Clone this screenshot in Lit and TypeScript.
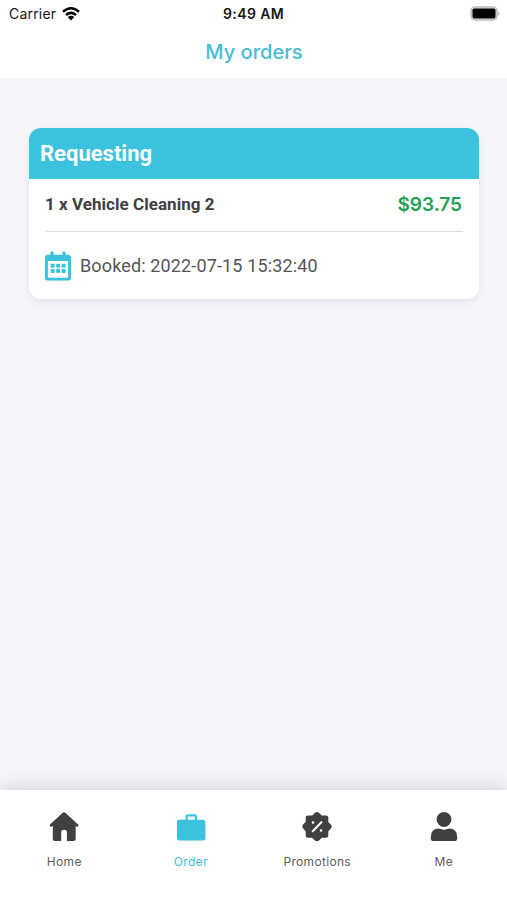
import { LitElement, html, css, svg } from "lit";
import { customElement } from "lit/decorators.js";
import { classMap } from "lit/directives/class-map.js";

const tabs = [
  {
    id: "home", label: "Home",
    icon: svg`<path d="M15 .8Q15.700 .8 16.300 1.300L29.100 13Q30 14.100 29 15Q28.300 15.500 27.400 14.900L26.700 14.300V27.400Q26.700 29.400 24.700 29.400H17.900V20.800Q17.900 18.200 15 18.200T12.200 20.800V29.400H5.800Q3.800 29.400 3.800 27.400V14.300L2.800 15Q1.900 15.500 1.200 15Q.2 14.100 1 13L13.700 1.300Q14.300 .8 15 .8Z"/>`,
  },
  {
    id: "order", label: "Order",
    icon: svg`<path fill-rule="evenodd" d="M3.300 8.300H9.500V5.300Q9.500 2.700 12.100 2.700H18.600Q21.200 2.700 21.200 5.300V8.300H27Q29.400 8.300 29.400 10.700V26.700Q29.400 29.100 27 29.100H3.300Q.9 29.100 .9 26.700V10.700Q.9 8.300 3.300 8.300ZM11.800 5V8.300H18.900V5Z"/>`,
  },
  {
    id: "promotions", label: "Promotions",
    icon: svg`<path d="M13 1.300Q15 -.4 17 1.300L19.800 4H24Q26.300 4 26.300 6V10.500L28.900 13Q30.400 15 28.900 17L26.300 19.700V24Q26.300 26.300 24 26.300H19.800L17 29Q15 30.500 13 29L10.200 26.300H6Q3.700 26.300 3.700 24V19.700L1.100 17Q-.4 15 1.100 13L3.700 10.500V6Q3.700 4 6 4H10.200Z"/><path d="M10.700 19.800L19.500 10.600" stroke="#fff" stroke-width="2" stroke-linecap="round"/><circle cx="11" cy="11" r="1.300" fill="#fff"/><circle cx="19" cy="19" r="1.300" fill="#fff"/>`,
  },
  {
    id: "me", label: "Me",
    icon: svg`<circle cx="15" cy="8" r="7.400"/><path d="M9 17Q10.500 17 11.800 17.500Q15 18.800 18.200 17.500Q19.500 17 21 17Q28.200 17.500 28.200 25.500V27.200Q28.200 29.600 25.800 29.600H4.200Q1.800 29.600 1.800 27.200V25.500Q1.800 17.500 9 17Z"/>`,
  },
];

@customElement("app-root")
export class AppRoot extends LitElement {
  static styles = css`
    :host { display: flex; flex-direction: column; height: 900px; background: #f4f6fa; font-family: Roboto, "Liberation Sans", sans-serif; overflow: hidden; }
    svg { display: block; flex: none; }
    .top { height: 78px; flex: none; background: #fff; font-family: Inter, sans-serif; box-shadow: 0 0 1px rgba(0, 0, 0, .05); }
    .status { height: 27px; display: grid; grid-template-columns: 1fr auto 1fr; align-items: center; padding: 0 7px 0 9px; color: #171719; }
    .carrier { display: flex; align-items: center; gap: 6px; font-size: 14px; letter-spacing: .2px; }
    .time { font-size: 14px; font-weight: 600; letter-spacing: .4px; margin-right: 2px; }
    .battery { justify-self: end; }
    .title { margin: 0; text-align: center; font-size: 20px; line-height: 50px; font-weight: 500; color: #45bdd6; padding-left: 1px; }
    main { flex: 1; padding: 50px 28px 0 29px; }
    .card { height: 171px; border-radius: 12px; background: #fff; overflow: hidden; box-shadow: 0 3px 10px rgba(0, 0, 0, .08); }
    .state { height: 51px; padding-left: 11px; line-height: 52px; color: #fff; background: #3ac2de; font-size: 22px; font-weight: 700; }
    .body { padding: 0 16px; color: #555; }
    .item { height: 50px; padding-bottom: 2px; display: flex; justify-content: space-between; align-items: center; border-bottom: 1px solid #d9dade; }
    .name { font-size: 17px; font-weight: 700; letter-spacing: .04px; color: #404042; }
    .price { font-family: Inter, sans-serif; font-size: 19px; font-weight: 600; color: #1fa155; padding-right: 1px; }
    .booked { display: flex; align-items: center; gap: 9px; height: 68px; font-size: 18px; letter-spacing: .14px; }
    .booked span { margin-top: -2px; }
    nav { height: 110px; flex: none; display: grid; grid-template-columns: repeat(4, 1fr); background: #fff; box-shadow: 0 0 20px rgba(0, 0, 0, .18); padding-left: 1px; }
    .tab { display: flex; flex-direction: column; align-items: center; padding-top: 21px; color: #404042; fill: currentColor; }
    .label { margin-top: 13px; font: 12px/16px Inter, sans-serif; letter-spacing: .32px; color: #5c5c5e; }
    .active, .active .label { color: #3bc2de; }
  `;

  render() {
    return html`
      <header class="top">
        <div class="status">
          <div class="carrier"><span>Carrier</span>
            <svg width="18" height="14" viewBox="0 0 18 14" fill="none" stroke="#000" stroke-width="2.500"><path d="M1 4.800Q9 -2.200 17 4.800M4 8Q9 3.800 14 8"/><path d="M5.800 10.100Q9 7.600 12.200 10.100L9 13.400Z" fill="#000" stroke="none"/></svg>
          </div>
          <span class="time">9:49 AM</span>
          <svg class="battery" width="30" height="15" viewBox="0 0 30 15"><rect x="1" y="1" width="26" height="13" rx="4" fill="#e4e4e4" stroke="#b9b9b9" stroke-width="1.400"/><rect x="2.500" y="2.500" width="23" height="10" rx="1.800"/><path d="M28.300 5.500Q30.700 7.500 28.300 9.500Z" fill="#b0b0b0"/></svg>
        </div>
        <h1 class="title">My orders</h1>
      </header>
      <main>
        <article class="card">
          <div class="state">Requesting</div>
          <div class="body">
            <div class="item"><span class="name">1 x Vehicle Cleaning 2</span><span class="price">$93.75</span></div>
            <div class="booked">
              <svg width="26" height="30" viewBox="0 0 26 30" fill="#3ac2de"><path fill-rule="evenodd" d="M2.800 3.800H5.400V1.800Q5.400 .3 7 .3T8.600 1.800V3.800H17.400V1.800Q17.400 .3 19 .3T20.600 1.800V3.800H23.200Q26 3.800 26 6.600V26.800Q26 29.600 23.200 29.600H2.800Q0 29.600 0 26.800V6.600Q0 3.800 2.800 3.800ZM2.900 10V26.700H23.100V10Z"/>${[12.7, 18.1].map(y => [5.6, 11.1, 16.6].map(x => svg`<rect x=${x} y=${y} width="4" height="4" rx="1"/>`))}</svg>
              <span>Booked: 2022-07-15 15:32:40</span>
            </div>
          </div>
        </article>
      </main>
      <nav>
        ${tabs.map(t => html`<div class=${classMap({ tab: true, active: t.id === "order" })}>
          <svg width="30" height="30" viewBox="0 -.5 30 30">${t.icon}</svg>
          <span class="label">${t.label}</span>
        </div>`)}
      </nav>`;
  }
}
